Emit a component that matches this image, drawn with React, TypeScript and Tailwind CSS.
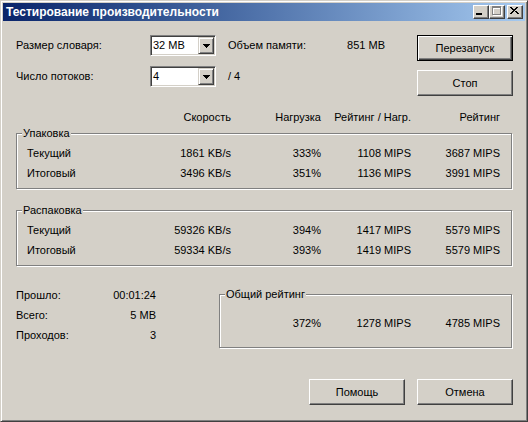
import type { ReactNode } from 'react'

const raised =
  'border border-t-white border-l-white border-r-[#404040] border-b-[#404040] shadow-[inset_-1px_-1px_0_#808080]'

const Button = ({ children, isDefault = false }: { children: ReactNode; isDefault?: boolean }) => (
  <button
    type="button"
    className={
      'flex h-[26px] w-[96px] items-center justify-center bg-[#d4d0c8] text-black ' +
      (isDefault
        ? 'border border-black shadow-[inset_1px_1px_0_#fff,inset_-1px_-1px_0_#404040,inset_-2px_-2px_0_#808080]'
        : raised)
    }
  >
    {children}
  </button>
)

const Combo = ({ value }: { value: string }) => (
  <div className="flex h-[21px] w-[66px] border border-t-[#808080] border-l-[#808080] border-r-white border-b-white bg-white p-[1px] shadow-[inset_1px_1px_0_#404040,inset_-1px_-1px_0_#d4d0c8]">
    <div className="flex flex-1 items-center pl-[1px]">{value}</div>
    <div className="flex h-[17px] w-[16px] items-center justify-center border border-t-[#d4d0c8] border-l-[#d4d0c8] border-r-[#404040] border-b-[#404040] bg-[#d4d0c8] shadow-[inset_1px_1px_0_#fff,inset_-1px_-1px_0_#808080]">
      <svg width="7" height="4" viewBox="0 0 7 4" shapeRendering="crispEdges">
        <path d="M0 0h7v1H0zM1 1h5v1H1zM2 2h3v1H2zM3 3h1v1H3z" fill="#000" />
      </svg>
    </div>
  </div>
)

const GroupBox = ({
  title,
  className,
  children,
}: {
  title: string
  className: string
  children: ReactNode
}) => (
  <div
    className={
      'relative border border-[#808080] shadow-[inset_1px_1px_0_#fff,1px_1px_0_#fff] ' + className
    }
  >
    <span className="absolute top-[-7px] left-[5px] bg-[#d4d0c8] px-[1px] leading-[13px]">
      {title}
    </span>
    {children}
  </div>
)

const cols = ['w-[84px]', 'w-[90px]', 'w-[90px]', 'w-[89px]']

const Row = ({ label, values }: { label: string; values: string[] }) => (
  <div className="flex h-[20px] items-center pl-[10px]">
    <div className="w-[120px]">{label}</div>
    {values.map((v, i) => (
      <div key={i} className={cols[i] + ' text-right'}>
        {v}
      </div>
    ))}
  </div>
)

const TitleButton = ({ children }: { children: ReactNode }) => (
  <div className={'h-[14px] w-[16px] bg-[#d4d0c8] ' + raised}>{children}</div>
)

export default function App() {
  return (
    <div className="h-[422px] w-[528px] border border-t-[#d4d0c8] border-l-[#d4d0c8] border-r-[#404040] border-b-[#404040] bg-[#d4d0c8] p-[2px] text-[11px] leading-[13px] text-black shadow-[inset_1px_1px_0_#fff,inset_-1px_-1px_0_#808080] font-['Liberation_Sans',Arial,sans-serif]">
      {/* title bar */}
      <div className="flex h-[18px] items-center bg-linear-to-r from-[#0a246a] to-[#a6caf0] pr-[2px] pl-[3px]">
        <div className="flex-1 text-[12px] font-bold text-white">Тестирование производительности</div>
        <TitleButton>
          <svg width="14" height="12" viewBox="0 0 14 12" shapeRendering="crispEdges" className="-mt-px -ml-px">
            <rect x="3" y="8" width="6" height="2" fill="#000" />
          </svg>
        </TitleButton>
        <TitleButton>
          <svg width="14" height="12" viewBox="0 0 14 12" shapeRendering="crispEdges" className="-mt-px -ml-px">
            <path d="M4 2h9v9H4zM5 4v6h7V4z" fill="#fff" fillRule="evenodd" />
            <path d="M3 1h9v9H3zM4 3v6h7V3z" fill="#808080" fillRule="evenodd" />
          </svg>
        </TitleButton>
        <div className="ml-[2px]">
          <TitleButton>
            <svg width="14" height="12" viewBox="0 0 14 12" shapeRendering="crispEdges" className="-mt-px -ml-px">
              <path
                d="M3 2h2v1H3zM4 3h2v1H4zM5 4h2v1H5zM6 5h2v1H6zM5 6h2v1H5zM4 7h2v1H4zM3 8h2v1H3zM9 2h2v1H9zM8 3h2v1H8zM7 4h2v1H7zM8 6h2v1H8zM9 7h2v1H9zM10 8h2v1h-2z"
                fill="#000"
              />
              <path d="M10 2h1v1h-1zM11 8h1v1h-1z" fill="#000" />
            </svg>
          </TitleButton>
        </div>
      </div>

      <div className="flex flex-col pt-[14px] pr-[12px] pl-[13px]">
        {/* top controls */}
        <div className="flex">
          <div className="flex flex-col gap-[10px]">
            <div className="flex h-[21px] items-center">
              <div className="w-[134px]">Размер словаря:</div>
              <Combo value="32 MB" />
              <div className="ml-[12px] flex w-[157px] justify-between">
                <span>Объем памяти:</span>
                <span>851 MB</span>
              </div>
            </div>
            <div className="flex h-[21px] items-center">
              <div className="w-[134px]">Число потоков:</div>
              <Combo value="4" />
              <div className="ml-[12px]">/ 4</div>
            </div>
          </div>
          <div className="ml-auto flex flex-col gap-[9px]">
            <Button isDefault>Перезапуск</Button>
            <Button>Стоп</Button>
          </div>
        </div>

        {/* headers */}
        <div className="mt-[15px] flex h-[13px] items-center pl-[11px]">
          <div className="w-[120px]" />
          <div className="w-[84px] text-right">Скорость</div>
          <div className="w-[90px] text-right">Нагрузка</div>
          <div className="w-[90px] text-right">Рейтинг / Нагр.</div>
          <div className="w-[89px] text-right">Рейтинг</div>
        </div>

        <GroupBox title="Упаковка" className="mt-[9px] h-[56px] w-[496px] pt-[9px]">
          <Row label="Текущий" values={['1861 KB/s', '333%', '1108 MIPS', '3687 MIPS']} />
          <Row label="Итоговый" values={['3496 KB/s', '351%', '1136 MIPS', '3991 MIPS']} />
        </GroupBox>

        <GroupBox title="Распаковка" className="mt-[21px] h-[56px] w-[496px] pt-[9px]">
          <Row label="Текущий" values={['59326 KB/s', '394%', '1417 MIPS', '5579 MIPS']} />
          <Row label="Итоговый" values={['59334 KB/s', '393%', '1419 MIPS', '5579 MIPS']} />
        </GroupBox>

        {/* totals */}
        <div className="mt-[19px] flex items-start">
          <div className="flex w-[140px] flex-col">
            {[
              ['Прошло:', '00:01:24'],
              ['Всего:', '5 MB'],
              ['Проходов:', '3'],
            ].map(([k, v]) => (
              <div key={k} className="flex h-[20px] items-center justify-between">
                <span>{k}</span>
                <span>{v}</span>
              </div>
            ))}
          </div>
          <GroupBox title="Общий рейтинг" className="mt-[9px] ml-[63px] h-[54px] w-[293px] pt-[18px]">
            <div className="flex h-[20px] items-center">
              <div className="w-[101px] text-right">372%</div>
              <div className="w-[90px] text-right">1278 MIPS</div>
              <div className="w-[89px] text-right">4785 MIPS</div>
            </div>
          </GroupBox>
        </div>

        {/* bottom buttons */}
        <div className="mt-[31px] flex justify-end gap-[12px]">
          <Button>Помощь</Button>
          <Button>Отмена</Button>
        </div>
      </div>
    </div>
  )
}
